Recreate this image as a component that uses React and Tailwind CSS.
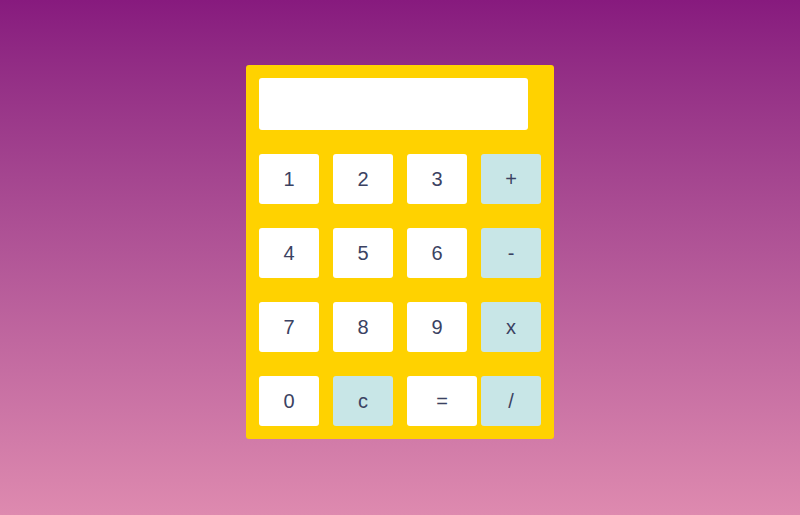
const ROWS = [
  ['1', '2', '3', '+'],
  ['4', '5', '6', '-'],
  ['7', '8', '9', 'x'],
]

const OPS = ['+', '-', 'x', '/', 'c']

function Key({ label, wide }) {
  const op = OPS.includes(label)
  return (
    <button
      className={`${wide ? 'w-[70px]' : 'w-[60px]'} h-[50px] rounded-[3px] text-[20px] text-[#3b4262] flex items-center justify-center ${op ? 'bg-[#c8e6e7]' : 'bg-white'}`}
    >
      {label}
    </button>
  )
}

export default function App() {
  return (
    <div
      className="w-full h-[515px] bg-gradient-to-b from-[#871a7e] to-[#de8aaf] pt-[65px] flex justify-center"
      style={{ fontFamily: '"Liberation Sans", Arial, sans-serif' }}
    >
      <div className="w-[308px] h-[374px] bg-[#ffd200] rounded-[3px] p-[13px]">
        <div className="w-[269px] h-[52px] bg-white rounded-[3px]" />
        {ROWS.map((row, i) => (
          <div key={i} className="flex gap-[14px] mt-[24px]">
            {row.map(k => <Key key={k} label={k} />)}
          </div>
        ))}
        {/* last row: = is wider */}
        <div className="flex mt-[24px]">
          <Key label="0" />
          <div className="ml-[14px]"><Key label="c" /></div>
          <div className="ml-[14px]"><Key label="=" wide /></div>
          <div className="ml-[4px]"><Key label="/" /></div>
        </div>
      </div>
    </div>
  )
}
